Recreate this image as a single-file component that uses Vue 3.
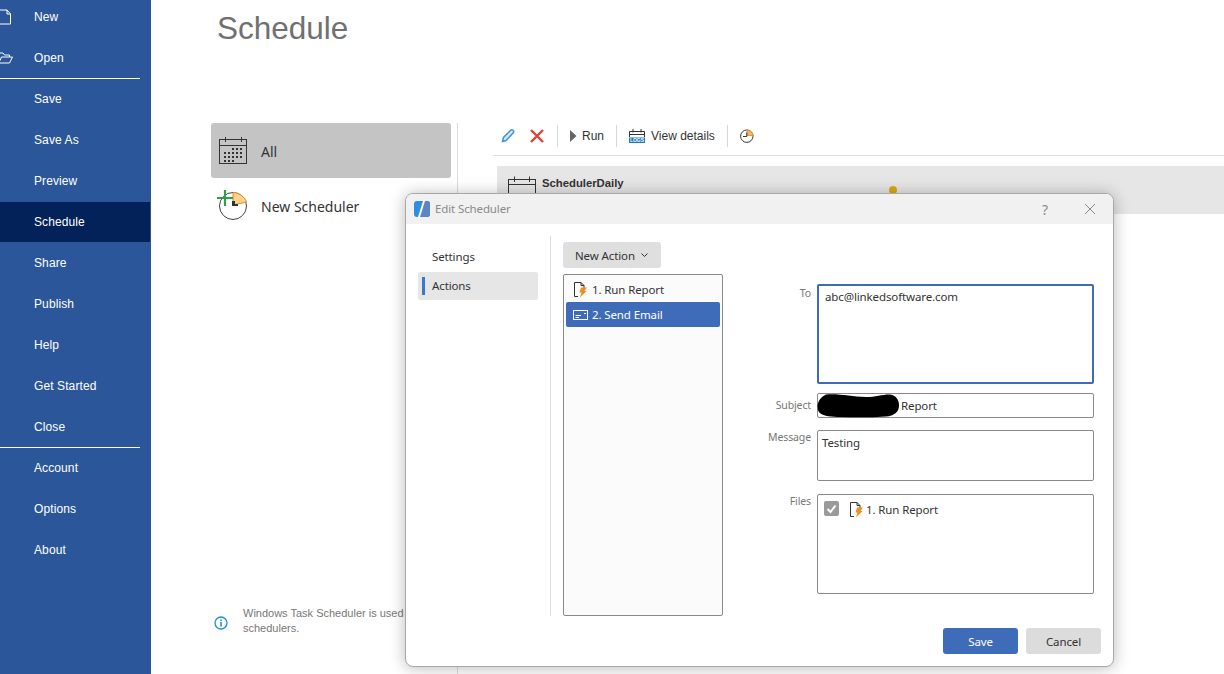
<script setup>
const navItems = [
  { label: 'New', icon: 'new' },
  { label: 'Open', icon: 'open', rule: true },
  { label: 'Save' },
  { label: 'Save As' },
  { label: 'Preview' },
  { label: 'Schedule', active: true },
  { label: 'Share' },
  { label: 'Publish' },
  { label: 'Help' },
  { label: 'Get Started' },
  { label: 'Close', rule: true },
  { label: 'Account' },
  { label: 'Options' },
  { label: 'About' },
]

// the month grid in the "All" icon: first row starts late, last row ends early
const calendarDots = []
for (let row = 0; row < 4; row++) {
  for (let col = 0; col < 5; col++) {
    if (row === 0 && col < 2) continue
    if (row === 3 && col > 2) continue
    calendarDots.push({ x: 6 + col * 4, y: 13 + row * 4 })
  }
}
</script>

<template>
  <div class="page">
    <aside class="sidebar">
      <div class="nav">
        <div
          v-for="item in navItems"
          :key="item.label"
          class="nav-item"
          :class="{ active: item.active, ruled: item.rule }"
        >
          <svg v-if="item.icon === 'new'" class="nav-icon" width="12" height="17" viewBox="0 0 12 17">
            <path d="M-2 1.500H7L10.500 5.500V15.500H-2M7 1.500V5.500H10.500" fill="none" stroke="#fff" stroke-width="1" />
          </svg>
          <svg v-if="item.icon === 'open'" class="nav-icon" width="14" height="13" viewBox="0 0 14 13">
            <path d="M-2 1.500H3L4.500 3.500H9.500V5.500M-2 11.500H9.500L12.500 5.500H1.500L-1 11" fill="none" stroke="#fff" stroke-width="1" />
          </svg>
          <span>{{ item.label }}</span>
        </div>
      </div>
    </aside>

    <main class="main">
      <h1 class="title">Schedule</h1>
      <div class="columns">
        <section class="left-pane">
          <div class="side-entry selected">
            <svg width="30" height="31" viewBox="0 0 30 31">
              <rect x="1.500" y="4.500" width="27" height="24" fill="none" stroke="#333" />
              <path d="M1.500 10.500H28.500M7.500 2V7M23.500 2V7" fill="none" stroke="#333" />
              <rect v-for="(dot, i) in calendarDots" :key="i" :x="dot.x" :y="dot.y" width="2" height="2" fill="#333" />
            </svg>
            <span>All</span>
          </div>
          <div class="side-entry">
            <svg class="new-icon" width="30" height="33" viewBox="0 0 30 33">
              <circle cx="15" cy="17" r="13.500" fill="none" stroke="#444" />
              <path d="M15 16V3.500C21 3.500 27 8 28.500 13Z" fill="#fbd38d" stroke="#e08a1e" />
              <path d="M14 12H17V15H20V17H14Z" fill="#333" />
              <path d="M7 1V17M-1 9H15" stroke="#2f9e4f" stroke-width="2.200" fill="none" />
            </svg>
            <span>New Scheduler</span>
          </div>
          <div class="info">
            <svg width="14" height="14" viewBox="0 0 14 14">
              <circle cx="7" cy="7" r="6" fill="none" stroke="#1f8fd6" stroke-width="1.300" />
              <rect x="6.200" y="6" width="1.600" height="4.500" fill="#1f8fd6" />
              <rect x="6.200" y="3.500" width="1.600" height="1.600" fill="#1f8fd6" />
            </svg>
            <p>Windows Task Scheduler is used to run the<br />schedulers.</p>
          </div>
        </section>

        <section class="right-pane">
          <div class="toolbar">
            <svg class="tool-icon" width="16" height="16" viewBox="0 0 16 16">
              <path d="M2.500 13.500L3.500 9.500L11 2C12 1 14.500 3 13.500 4.500L6 12.500Z" fill="#d6e9f8" stroke="#3d94dc" stroke-width="1.500" />
            </svg>
            <svg class="tool-icon cross" width="16" height="16" viewBox="0 0 16 16">
              <path d="M2 2L14 14M14 2L2 14" stroke="#e0403a" stroke-width="2.400" />
            </svg>
            <i class="tool-sep"></i>
            <span class="tool-btn">
              <svg width="7" height="12" viewBox="0 0 7 12"><path d="M0 0L6.500 6L0 12Z" fill="#666" /></svg>
              Run
            </span>
            <i class="tool-sep"></i>
            <span class="tool-btn logs">
              <svg width="16" height="14" viewBox="0 0 16 14">
                <path d="M0.500 8V2.500H15.500V8M0.500 5.500H15.500M4 0V3.500M12 0V3.500" fill="none" stroke="#333" stroke-width="1" />
                <rect x="0" y="8.500" width="16" height="5.500" fill="#1976c5" />
                <text x="8" y="13.400" text-anchor="middle" class="logs-text">LOGS</text>
              </svg>
              View details
            </span>
            <i class="tool-sep"></i>
            <svg class="tool-icon" width="14" height="14" viewBox="0 0 14 14">
              <circle cx="6.800" cy="7.200" r="6.200" fill="none" stroke="#333" />
              <path d="M7 6.500V1C10 1 13 3.500 13.300 6.500Z" fill="#f7b45a" stroke="#e08a1e" stroke-width="0.800" />
              <path d="M6.800 3.500V7.500H3" fill="none" stroke="#333" />
            </svg>
          </div>
          <div class="job-row">
            <svg width="30" height="30" viewBox="0 0 30 30">
              <rect x="1.500" y="4.500" width="27" height="24" fill="none" stroke="#333" />
              <path d="M1.500 9.500H28.500M7.500 1.500V7M22.500 1.500V7" fill="none" stroke="#333" />
            </svg>
            <strong>SchedulerDaily</strong>
            <i class="job-dot"></i>
          </div>
        </section>
      </div>
    </main>

    <div class="dialog">
      <header class="dialog-head">
        <svg width="16" height="16" viewBox="0 0 16 16">
          <rect width="16" height="16" rx="3" fill="#2f8fdc" />
          <path d="M9 0H13A3 3 0 0 1 16 3V13A3 3 0 0 1 13 16H6Z" fill="#5b86c4" />
          <path d="M9 0H11L6 16H4Z" fill="#fff" />
        </svg>
        <span class="dialog-title">Edit Scheduler</span>
        <span class="dialog-help">?</span>
        <svg class="dialog-close" width="12" height="12" viewBox="0 0 12 12">
          <path d="M1 1L11 11M11 1L1 11" stroke="#8a8a8a" stroke-width="1" />
        </svg>
      </header>

      <div class="dialog-body">
        <nav class="tabs">
          <div class="tab">Settings</div>
          <div class="tab current">Actions</div>
        </nav>

        <div class="actions">
          <button class="new-action">
            New Action
            <svg width="7" height="5" viewBox="0 0 7 5"><path d="M0.500 0.500L3.500 3.500L6.500 0.500" fill="none" stroke="#333" /></svg>
          </button>
          <div class="action-list">
            <div class="action-row">
              <svg width="16" height="17" viewBox="0 0 16 17">
                <path d="M6 15.500H2.500V1.500H9L12 4.500V7M9 1.500V4.500H12" fill="none" stroke="#333" />
                <path d="M9 6.500H15L12.500 10H14.500L8 16.500L9.500 11.500H7.500Z" fill="#ef8f1f" />
              </svg>
              <span>1. Run Report</span>
            </div>
            <div class="action-row picked">
              <svg width="16" height="10" viewBox="0 0 16 10">
                <rect x="1.500" y="0.500" width="14" height="9" fill="none" stroke="#fff" />
                <path d="M3.500 5.500H9M3.500 7.500H7M12 3.500H14" stroke="#fff" />
              </svg>
              <span>2. Send Email</span>
            </div>
          </div>
        </div>

        <form class="email-form" @submit.prevent>
          <label class="field-label">To</label>
          <div class="field field-to">abc@linkedsoftware.com</div>

          <label class="field-label subject-label">Subject</label>
          <div class="field field-subject">
            <svg class="blackout" width="84" height="24" viewBox="0 0 84 24">
              <path d="M10 0.500C25 -0.500 35 3 50 3C60 3 68 0 74 0.500C80 1 83 6 83 11.500C83 18 78 22 70 22.500C55 23.500 40 23.500 25 23C15 22.700 8 22.500 4 19C0 16 0 5 10 0.500Z" fill="#000" />
            </svg>
            <span>Report</span>
          </div>

          <label class="field-label tight">Message</label>
          <div class="field field-message">Testing</div>

          <label class="field-label tight">Files</label>
          <div class="field field-files">
            <span class="check">
              <svg width="11" height="10" viewBox="0 0 11 10"><path d="M1.500 5L4.500 8L9.500 1.500" fill="none" stroke="#fff" stroke-width="2" /></svg>
            </span>
            <svg width="16" height="17" viewBox="0 0 16 17">
              <path d="M6 15.500H2.500V1.500H9L12 4.500V7M9 1.500V4.500H12" fill="none" stroke="#333" />
              <path d="M9 6.500H15L12.500 10H14.500L8 16.500L9.500 11.500H7.500Z" fill="#ef8f1f" />
            </svg>
            <span>1. Run Report</span>
          </div>
        </form>
      </div>

      <footer class="dialog-foot">
        <button class="foot-btn primary">Save</button>
        <button class="foot-btn">Cancel</button>
      </footer>
    </div>
  </div>
</template>

<style>
html,
body {
  margin: 0;
  overflow: hidden;
  background: #fff;
}
</style>

<style scoped>
.page {
  position: relative;
  display: flex;
  width: 1224px;
  height: 674px;
  overflow: hidden;
  font-family: "Liberation Sans", Arial, sans-serif;
  background: #fff;
}

.sidebar {
  flex: 0 0 151px;
  background: #2b579a;
  color: #fff;
  font-size: 12px;
  letter-spacing: 0.1px;
}

.nav {
  margin-top: -3px;
}

.nav-item {
  position: relative;
  display: flex;
  align-items: center;
  width: 150px;
  height: 40px;
  margin-bottom: 1px;
  padding-left: 34px;
  box-sizing: border-box;
}

.nav-item.active {
  background: #03225a;
}

.nav-item.ruled::after {
  content: "";
  position: absolute;
  left: 0;
  bottom: -1px;
  width: 140px;
  height: 1px;
  background: #fff;
}

.nav-icon {
  position: absolute;
  left: 0;
  top: 50%;
  transform: translateY(-50%);
}

.main {
  flex: 1;
  display: flex;
  flex-direction: column;
  padding-left: 60px;
  min-width: 0;
}

.title {
  margin: 10px 0 0 6px;
  height: 113px;
  font-size: 31.500px;
  line-height: 36px;
  font-weight: 400;
  color: #707070;
}

.columns {
  flex: 1;
  display: flex;
  min-height: 0;
}

.left-pane {
  position: relative;
  flex: 0 0 247px;
  box-sizing: border-box;
  border-right: 1px solid #dcdcdc;
  padding-right: 6px;
}

.side-entry {
  display: flex;
  align-items: center;
  gap: 13px;
  height: 55px;
  padding-left: 7px;
  border-radius: 3px;
  font-family: "Noto Sans", sans-serif;
  font-size: 14px;
  color: #333;
}

.side-entry span {
  padding-top: 2px;
}

.side-entry.selected {
  background: #c4c4c4;
}

.new-icon {
  overflow: visible;
}

.info {
  position: absolute;
  left: 3px;
  bottom: 38px;
  display: flex;
  align-items: center;
  gap: 15px;
  white-space: nowrap;
}

.info svg {
  margin-top: 4px;
}

.info p {
  margin: 0;
  font-size: 11px;
  line-height: 15px;
  color: #777;
}

.right-pane {
  flex: 1;
  margin-left: 35px;
  min-width: 0;
}

.toolbar {
  display: flex;
  align-items: center;
  height: 26px;
  padding: 0 0 6px 7px;
  border-bottom: 1px solid #dedede;
  font-size: 12px;
  color: #333;
}

.tool-icon.cross {
  margin-left: 13px;
}

.tool-sep {
  width: 1px;
  height: 22px;
  margin: 0 12px;
  background: #d8d8d8;
}

.tool-btn {
  display: flex;
  align-items: center;
  gap: 5px;
}

.logs {
  gap: 6px;
}

.logs-text {
  font-size: 5px;
  font-weight: 700;
  fill: #fff;
}

.job-row {
  position: relative;
  display: flex;
  align-items: flex-start;
  gap: 5px;
  height: 48px;
  margin: 10px 0 0 4px;
  padding: 9px 0 0 10px;
  box-sizing: border-box;
  background: #e6e6e6;
  font-size: 11.300px;
  color: #333;
}

.job-row strong {
  padding-top: 2px;
}

.job-dot {
  position: absolute;
  left: 392px;
  top: 20px;
  width: 8px;
  height: 8px;
  border-radius: 50%;
  background: #dcaa14;
}

.dialog {
  position: absolute;
  left: 405px;
  top: 193px;
  display: flex;
  flex-direction: column;
  width: 709px;
  height: 474px;
  box-sizing: border-box;
  border: 1px solid #a8a8a8;
  border-radius: 8px;
  background: #fff;
  box-shadow: 0 1px 16px rgba(0, 0, 0, 0.28);
  overflow: hidden;
  font-family: "Noto Sans", sans-serif;
  font-size: 11.500px;
  letter-spacing: -0.12px;
  color: #333;
}

.dialog-head {
  display: flex;
  align-items: center;
  height: 30px;
  padding: 0 17px 0 8px;
  background: #f1f1f1;
}

.dialog-title {
  flex: 1;
  margin-left: 5px;
  padding-bottom: 2px;
  color: #8a8a8a;
}

.dialog-help {
  margin-right: 36px;
  font-size: 14px;
  color: #8a8a8a;
}

.dialog-body {
  display: flex;
  height: 392px;
}

.tabs {
  flex: 0 0 144px;
  box-sizing: border-box;
  padding: 19px 0 0 12px;
}

.tab {
  display: flex;
  align-items: center;
  width: 120px;
  height: 28px;
  margin-bottom: 1px;
  padding: 0 0 2px 14px;
  box-sizing: border-box;
  border-radius: 2px;
}

.tab.current {
  position: relative;
  padding-bottom: 1px;
  background: #e6e6e6;
}

.tab.current::before {
  content: "";
  position: absolute;
  left: 4px;
  top: 5px;
  width: 3px;
  height: 18px;
  background: #3a78c9;
}

.actions {
  flex: 0 0 173px;
  box-sizing: border-box;
  margin-top: 12px;
  padding: 6px 0 0 12px;
  border-left: 1px solid #dcdcdc;
}

.new-action {
  display: flex;
  align-items: center;
  gap: 6px;
  height: 26px;
  padding: 0 13px 0 12px;
  border: 0;
  border-radius: 3px;
  background: #dfdfdf;
  font: inherit;
  letter-spacing: inherit;
  color: #333;
}

.action-list {
  box-sizing: border-box;
  width: 160px;
  height: 342px;
  margin-top: 6px;
  padding: 2px;
  border: 1px solid #8a8a8a;
  border-radius: 2px;
  background: #fbfbfb;
}

.action-row {
  display: flex;
  align-items: center;
  gap: 4px;
  height: 25px;
  padding-left: 6px;
  border-radius: 2px;
}

.action-row span {
  padding-bottom: 1px;
}

.action-row.picked {
  background: #3f6cb8;
  color: #fff;
}

.email-form {
  display: grid;
  grid-template-columns: 88px 277px;
  column-gap: 6px;
  align-content: start;
  padding-top: 60px;
}

.field-label {
  text-align: right;
  font-size: 10.500px;
  line-height: 18px;
  color: #777;
}

.field-label.tight {
  line-height: 14px;
}

.field {
  box-sizing: border-box;
  padding: 3px 7px;
  border: 1px solid #8a8a8a;
  border-radius: 2px;
  line-height: 17px;
}

.field-to {
  height: 100px;
  margin-bottom: 9px;
  padding: 2px 6px;
  border: 2px solid #3f6cb8;
}

.field-subject {
  position: relative;
  display: flex;
  align-items: center;
  height: 25px;
  margin-bottom: 12px;
  padding: 0 0 1px 83px;
}

.subject-label {
  line-height: 25px;
}

.blackout {
  position: absolute;
  left: -2px;
  top: 0;
}

.field-message {
  height: 51px;
  margin-bottom: 13px;
  padding-left: 4px;
}

.field-files {
  display: flex;
  align-items: flex-start;
  gap: 2px;
  height: 100px;
  padding: 6px;
}

.check {
  display: flex;
  align-items: center;
  justify-content: center;
  width: 15px;
  height: 15px;
  margin-right: 7px;
  border-radius: 2px;
  background: #9a9a9a;
}

.dialog-foot {
  display: flex;
  justify-content: flex-end;
  gap: 8px;
  padding: 12px 12px 0 0;
}

.foot-btn {
  width: 75px;
  height: 26px;
  border: 0;
  border-radius: 3px;
  background: #dcdcdc;
  font: inherit;
  letter-spacing: inherit;
  color: #333;
}

.foot-btn.primary {
  background: #3f6cb8;
  color: #fff;
}
</style>
